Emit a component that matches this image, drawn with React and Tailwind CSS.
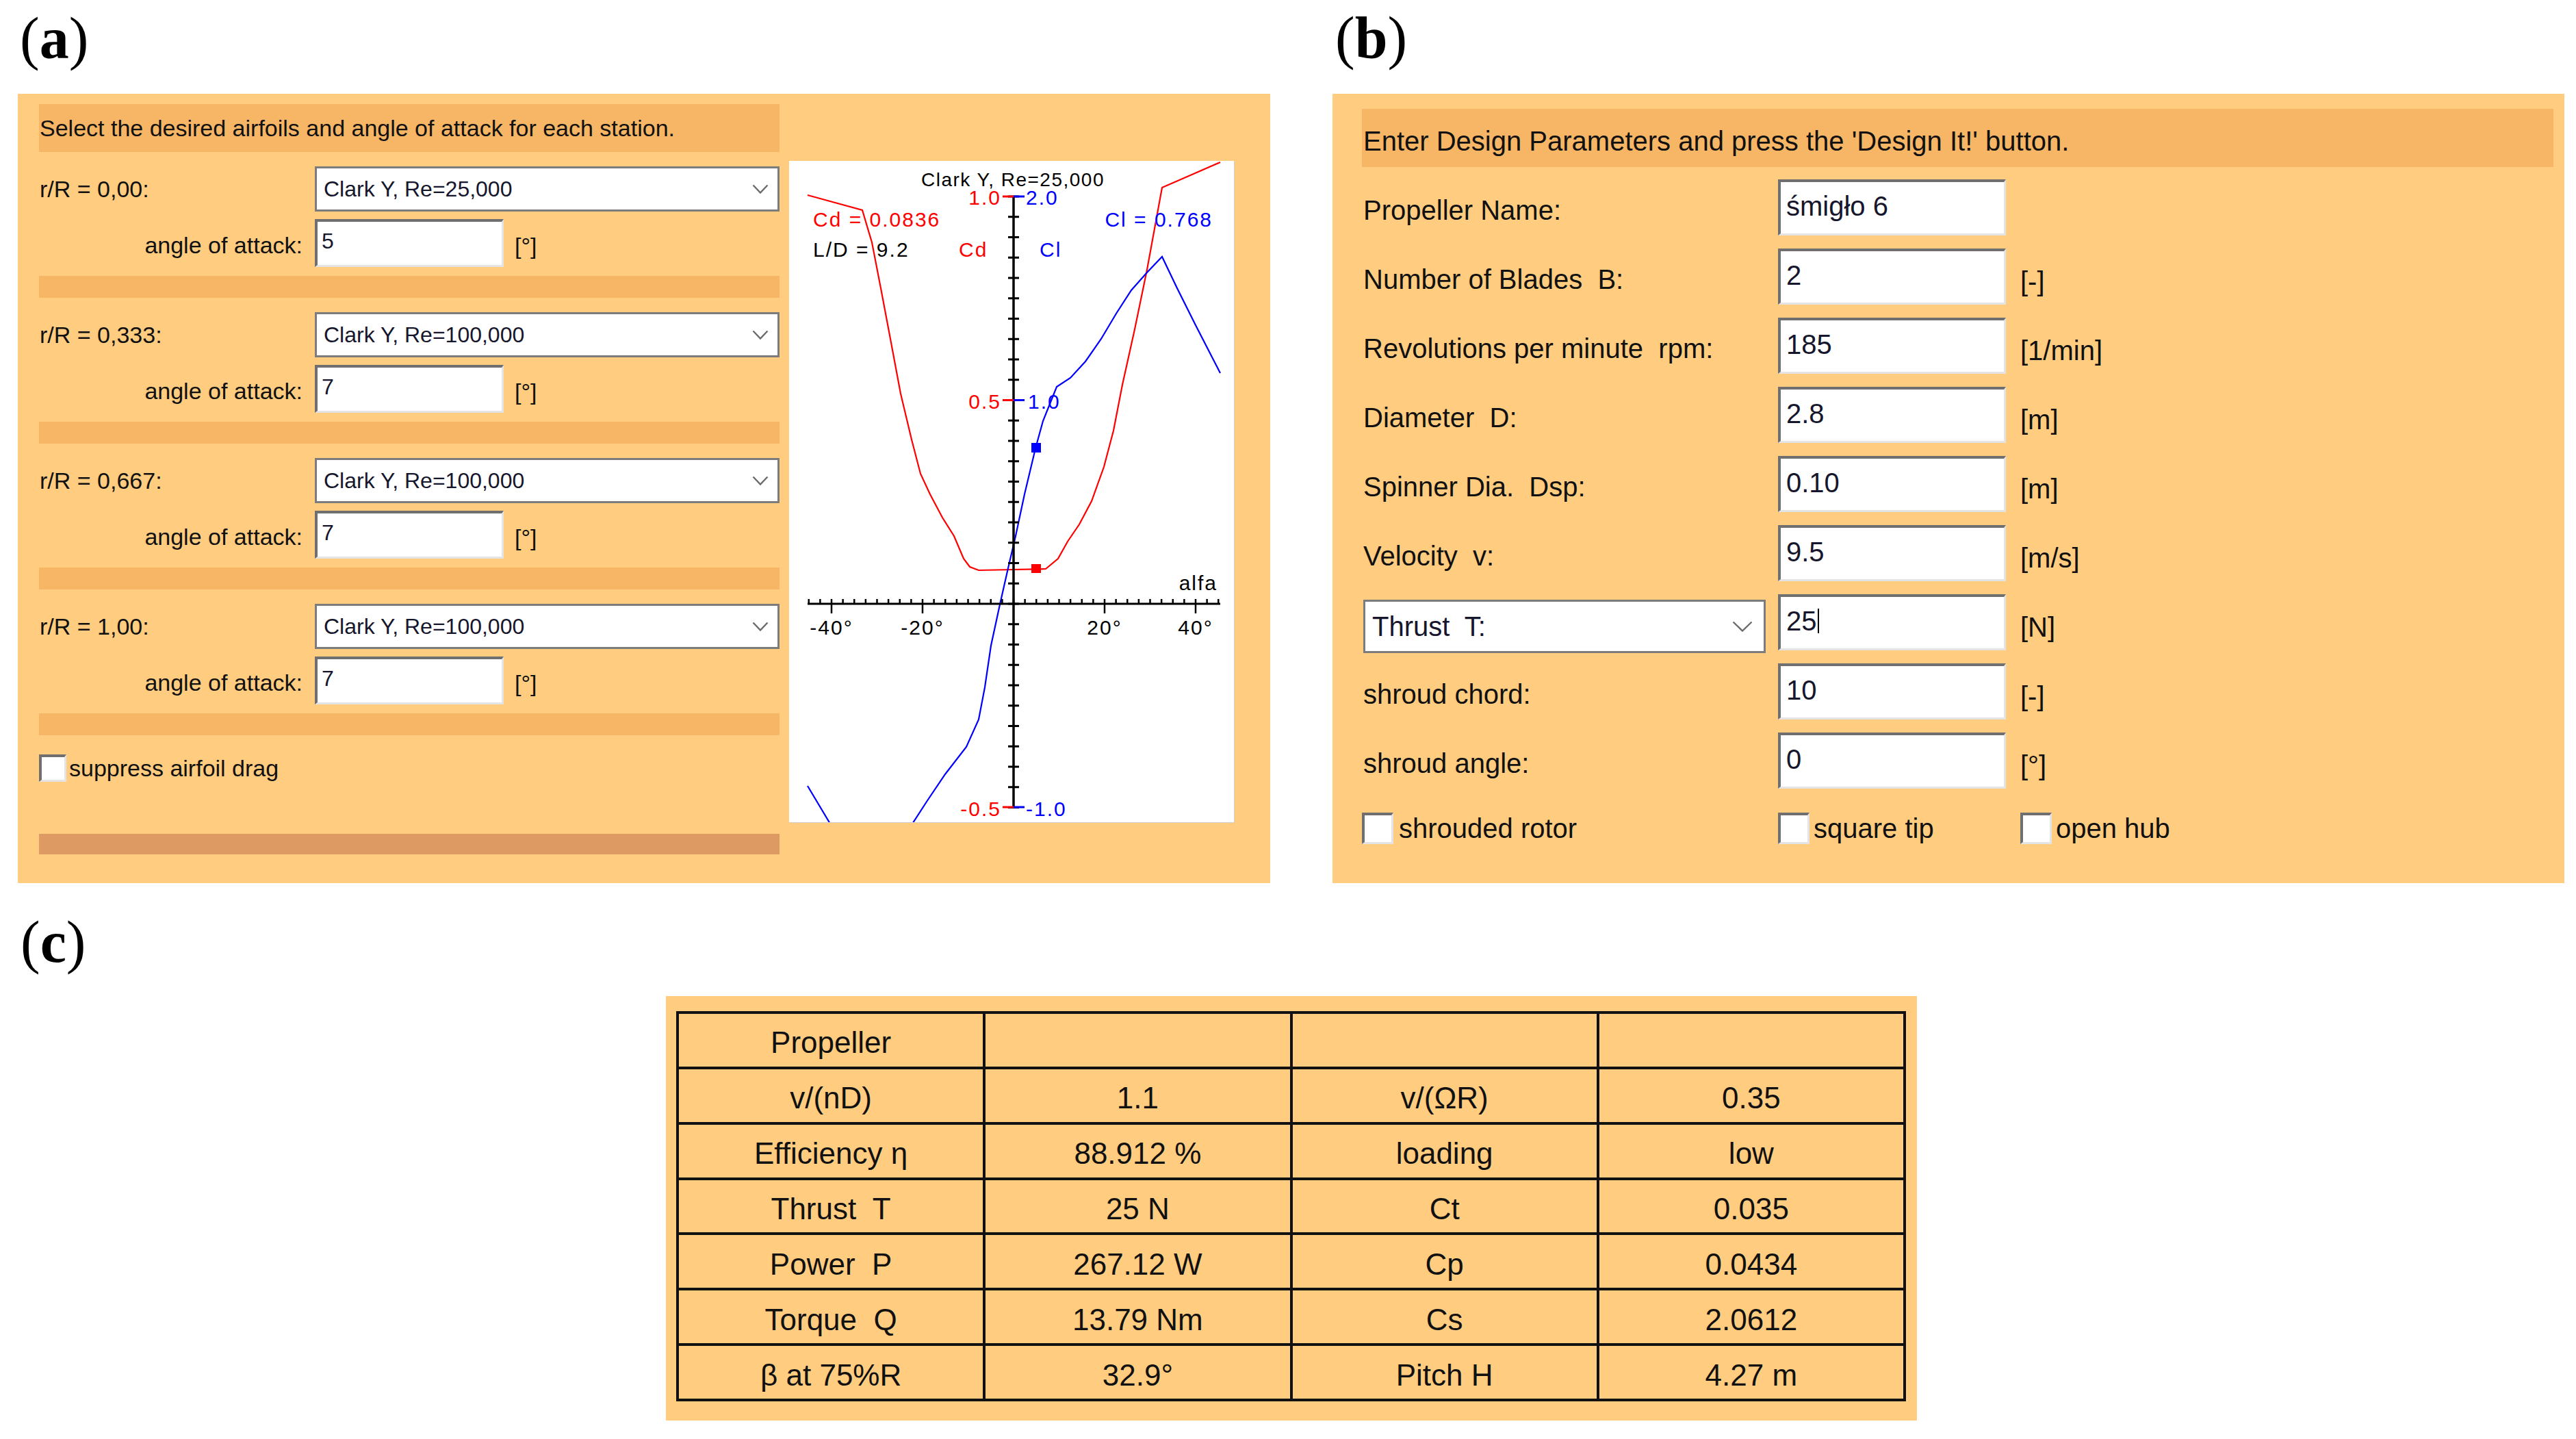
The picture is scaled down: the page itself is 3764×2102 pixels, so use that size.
import React from "react";

const F = "font-['Liberation_Sans',Arial,sans-serif]";
const SERIF = "font-['Liberation_Serif','Times_New_Roman',serif]";

const inset =
  "bg-white border-t-[4px] border-l-[4px] border-b-[3px] border-r-[3px] border-t-[#6f6f6f] border-l-[#6f6f6f] border-b-[#e4e4e4] border-r-[#e4e4e4]";

function Chevron({ w = 24, h = 13 }) {
  return (
    <svg width={w} height={h} viewBox={`0 0 ${w} ${h}`} className="block shrink-0">
      <polyline
        points={`1.5,1.5 ${w / 2},${h - 1.5} ${w - 1.5},1.5`}
        fill="none"
        stroke="#6a6a6a"
        strokeWidth="2.4"
      />
    </svg>
  );
}

function Label({ letter }) {
  return (
    <div className={`${SERIF} text-[86px] leading-none text-black`}>
      (<span className="font-bold">{letter}</span>)
    </div>
  );
}

function Checkbox({ size }) {
  return <div className={`${inset} shrink-0`} style={{ width: size, height: size }} />;
}

const stations = [
  { r: "r/R = 0,00:", af: "Clark Y, Re=25,000", a: "5" },
  { r: "r/R = 0,333:", af: "Clark Y, Re=100,000", a: "7" },
  { r: "r/R = 0,667:", af: "Clark Y, Re=100,000", a: "7" },
  { r: "r/R = 1,00:", af: "Clark Y, Re=100,000", a: "7" },
];

function Chart() {
  const ox = 328;
  const oy = 647;
  const k = 6.65;
  const cd = [
    [27, 50], [107, 72], [121, 119], [134, 186], [148, 260], [163, 340], [179, 407],
    [192, 457], [206, 487], [224, 521], [241, 548], [255, 581], [264, 593], [277, 598],
    [375, 596], [393, 581], [407, 556], [424, 531], [442, 497], [460, 447], [474, 394],
    [487, 327], [505, 246], [523, 159], [534, 99], [545, 39], [630, 2],
  ];
  const cl = [
    [27, 913], [70, 985], [150, 1010], [179, 970], [201, 936], [228, 896], [259, 856],
    [277, 816], [286, 769], [295, 708], [308, 648], [320, 595], [331, 548], [344, 487],
    [360, 420], [371, 380], [391, 330], [411, 317], [433, 293], [456, 260], [478, 223],
    [500, 189], [523, 163], [545, 140], [567, 186], [594, 240], [630, 310],
  ];
  const pts = (a) => a.map((p) => p.join(",")).join(" ");
  const yt = Array.from({ length: 31 }, (_, i) => 52 + i * 29.75);
  const xt = Array.from({ length: 37 }, (_, i) => -45 + i * 2.5);
  const txt = { fontFamily: "'Liberation Sans', Arial, sans-serif", fontSize: 30, letterSpacing: 2 };
  return (
    <svg width="650" height="966" viewBox="0 0 650 966" className="block">
      <rect x="0" y="0" width="650" height="966" fill="#fff" />
      <polyline points={pts(cd)} fill="none" stroke="#ff0000" strokeWidth="2.2" />
      <polyline points={pts(cl)} fill="none" stroke="#0000ff" strokeWidth="2.2" />
      {/* axes */}
      <line x1="27" y1={oy} x2="630" y2={oy} stroke="#000" strokeWidth="3" />
      <line x1={ox} y1="52" x2={ox} y2="944" stroke="#000" strokeWidth="3.5" />
      {yt.map((y, i) => (
        <line key={"y" + i} x1={ox - 8} y1={y} x2={ox + 8} y2={y} stroke="#000" strokeWidth="3" />
      ))}
      {xt.map((a, i) => {
        const x = ox + a * k;
        const major = a === -40 || a === -20 || a === 20 || a === 40;
        return (
          <line
            key={"x" + i}
            x1={x}
            y1={oy - 7}
            x2={x}
            y2={major ? oy + 14 : oy}
            stroke="#000"
            strokeWidth="2.5"
          />
        );
      })}
      {[52, 349.5, 944].map((y, i) => (
        <g key={"m" + i}>
          <line x1={ox - 16} y1={y} x2={ox} y2={y} stroke="#ff0000" strokeWidth="3" />
          <line x1={ox} y1={y} x2={ox + 16} y2={y} stroke="#0000ff" strokeWidth="3" />
        </g>
      ))}
      {/* markers */}
      <rect x="354" y="589" width="14" height="13" fill="#ff0000" />
      <rect x="354" y="412" width="14" height="14" fill="#0000ff" />
      {/* labels */}
      <text x="327" y="37" textAnchor="middle" fill="#000" style={{ ...txt, fontSize: 28, letterSpacing: 1.5 }}>
        Clark Y, Re=25,000
      </text>
      <text x="310" y="64" textAnchor="end" fill="#ff0000" style={txt}>1.0</text>
      <text x="346" y="64" fill="#0000ff" style={txt}>2.0</text>
      <text x="310" y="362" textAnchor="end" fill="#ff0000" style={txt}>0.5</text>
      <text x="349" y="362" fill="#0000ff" style={txt}>1.0</text>
      <text x="310" y="957" textAnchor="end" fill="#ff0000" style={txt}>-0.5</text>
      <text x="346" y="957" fill="#0000ff" style={txt}>-1.0</text>
      <text x="35" y="96" fill="#ff0000" style={txt}>Cd = 0.0836</text>
      <text x="35" y="140" fill="#000" style={txt}>L/D = 9.2</text>
      <text x="248" y="140" fill="#ff0000" style={txt}>Cd</text>
      <text x="366" y="140" fill="#0000ff" style={txt}>Cl</text>
      <text x="619" y="96" textAnchor="end" fill="#0000ff" style={txt}>Cl = 0.768</text>
      <text x="626" y="627" textAnchor="end" fill="#000" style={txt}>alfa</text>
      {[-40, -20, 20, 40].map((a) => (
        <text key={a} x={ox + a * k} y="692" textAnchor="middle" fill="#000" style={txt}>
          {a}°
        </text>
      ))}
    </svg>
  );
}

function PanelA() {
  return (
    <div className="w-[1830px] h-[1153px] bg-[#ffcc80] flex pl-[31px]">
      <div className="w-[1082px] pt-[15px] flex flex-col text-[34px] text-[#111] leading-none">
        <div className="h-[70px] bg-[#f6b665] flex items-center pl-[1px] whitespace-nowrap">
          Select the desired airfoils and angle of attack for each station.
        </div>
        {stations.map((s, i) => (
          <React.Fragment key={i}>
            <div className="mt-[21px] h-[66px] flex items-center">
              <div className="w-[403px] pl-[1px] whitespace-nowrap">{s.r}</div>
              <div className="w-[679px] h-[66px] bg-white border-[3px] border-[#7c7c7c] flex items-center pl-[10px] pr-[13px] text-[32px] text-[#16162c]">
                <span className="flex-1">{s.af}</span>
                <Chevron w={24} h={14} />
              </div>
            </div>
            <div className="mt-[11px] h-[70px] flex items-center">
              <div className="w-[403px] pr-[18px] text-right whitespace-nowrap pt-[6px]">angle of attack:</div>
              <div className={`${inset} w-[276px] h-[70px] pl-[6px] pt-[12px] text-[32px] text-[#16162c]`}>{s.a}</div>
              <div className="ml-[16px] pt-[8px]">[°]</div>
            </div>
            <div className="mt-[13px] h-[32px] bg-[#f6b665]" />
          </React.Fragment>
        ))}
        <div className="mt-[27px] h-[41px] flex items-center">
          <Checkbox size={40} />
          <span className="ml-[4px] whitespace-nowrap">suppress airfoil drag</span>
        </div>
        <div className="mt-[76px] h-[30px] bg-[#dd9a62]" />
      </div>
      <div className="ml-[14px] mt-[98px] w-[650px] h-[966px] shadow-[1px_1px_0_#cfcfcf]">
        <Chart />
      </div>
    </div>
  );
}

const rowsB = [
  { l: "Propeller Name:", v: "śmigło 6", u: "" },
  { l: "Number of Blades  B:", v: "2", u: "[-]" },
  { l: "Revolutions per minute  rpm:", v: "185", u: "[1/min]" },
  { l: "Diameter  D:", v: "2.8", u: "[m]" },
  { l: "Spinner Dia.  Dsp:", v: "0.10", u: "[m]" },
  { l: "Velocity  v:", v: "9.5", u: "[m/s]" },
  { l: null, v: "25", u: "[N]", cursor: true },
  { l: "shroud chord:", v: "10", u: "[-]" },
  { l: "shroud angle:", v: "0", u: "[°]" },
];

function PanelB() {
  return (
    <div className="w-[1800px] h-[1153px] bg-[#ffcc80] pl-[43px] pr-[16px] pt-[22px] flex flex-col text-[40px] text-[#111] leading-none">
      <div className="h-[85px] bg-[#f6b665] flex items-center pl-[2px] pt-[8px] whitespace-nowrap">
        Enter Design Parameters and press the 'Design It!' button.
      </div>
      <div className="mt-[18px] flex flex-col gap-[19px]">
        {rowsB.map((r, i) => (
          <div key={i} className="h-[82px] flex items-center">
            <div className="w-[608px] pl-[2px] whitespace-pre pt-[8px]">
              {r.l !== null ? (
                r.l
              ) : (
                <div className="-mt-[8px] mt-[4px] w-[588px] h-[78px] bg-white border-[3px] border-[#7c7c7c] flex items-center pl-[10px] pr-[16px] text-[#16162c]">
                  <span className="flex-1 whitespace-pre">Thrust  T:</span>
                  <Chevron w={30} h={16} />
                </div>
              )}
            </div>
            <div className={`${inset} w-[333px] h-[82px] pl-[8px] pb-[6px] flex items-center text-[#16162c]`}>
              <span>{r.v}</span>
              {r.cursor && <span className="ml-[1px] w-[2px] h-[36px] bg-black" />}
            </div>
            <div className="ml-[21px] pt-[14px] whitespace-nowrap">{r.u}</div>
          </div>
        ))}
      </div>
      <div className="mt-[34px] h-[48px] flex items-center">
        <div className="w-[608px] flex items-center">
          <Checkbox size={46} />
          <span className="ml-[8px] whitespace-nowrap">shrouded rotor</span>
        </div>
        <div className="w-[354px] flex items-center">
          <Checkbox size={46} />
          <span className="ml-[6px] whitespace-nowrap">square tip</span>
        </div>
        <div className="flex items-center">
          <Checkbox size={46} />
          <span className="ml-[6px] whitespace-nowrap">open hub</span>
        </div>
      </div>
    </div>
  );
}

const tableRows = [
  ["Propeller", "", "", ""],
  ["v/(nD)", "1.1", "v/(ΩR)", "0.35"],
  ["Efficiency η", "88.912 %", "loading", "low"],
  ["Thrust  T", "25 N", "Ct", "0.035"],
  ["Power  P", "267.12 W", "Cp", "0.0434"],
  ["Torque  Q", "13.79 Nm", "Cs", "2.0612"],
  ["β at 75%R", "32.9°", "Pitch H", "4.27 m"],
];

function PanelC() {
  return (
    <div className="w-[1828px] h-[620px] bg-[#ffcc80] pl-[15px] pt-[22px]">
      <table className="w-[1797px] h-[570px] table-fixed border-collapse border-[4px] border-[#111] text-[44px] text-[#111] leading-none">
        <tbody>
          {tableRows.map((r, i) => (
            <tr key={i}>
              {r.map((c, j) => (
                <td key={j} className="border-[4px] border-[#111] text-center align-middle whitespace-pre pt-[8px]">
                  {c}
                </td>
              ))}
            </tr>
          ))}
        </tbody>
      </table>
    </div>
  );
}

export default function App() {
  return (
    <div className={`w-[3764px] h-[2102px] bg-white overflow-hidden ${F}`}>
      <div className="flex">
        <div className="ml-[26px] flex flex-col">
          <div className="h-[137px] pt-[13px] pl-[3px]">
            <Label letter="a" />
          </div>
          <PanelA />
        </div>
        <div className="ml-[91px] flex flex-col">
          <div className="h-[137px] pt-[12px] pl-[4px]">
            <Label letter="b" />
          </div>
          <PanelB />
        </div>
      </div>
      <div className="h-[165px] pt-[43px] pl-[30px]">
        <Label letter="c" />
      </div>
      <div className="ml-[973px]">
        <PanelC />
      </div>
    </div>
  );
}
